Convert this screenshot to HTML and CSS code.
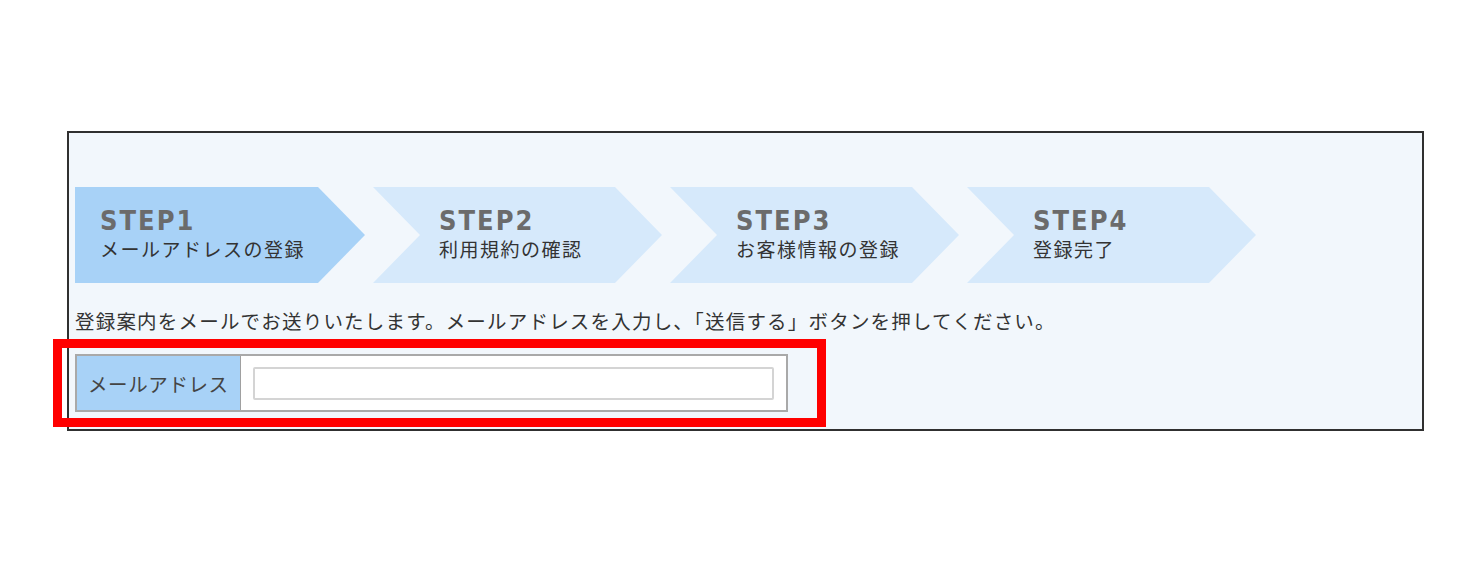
FILE: index.html
```html
<!DOCTYPE html>
<html lang="ja">
<head>
<meta charset="utf-8">
<title>メールアドレスの登録</title>
<link rel="stylesheet" href="styles.css">
</head>
<body>
<div class="panel">
  <ol class="steps">
    <li class="step step-current">
      <span class="step-num">STEP1</span>
      <span class="step-label">メールアドレスの登録</span>
    </li>
    <li class="step step-next">
      <span class="step-num">STEP2</span>
      <span class="step-label">利用規約の確認</span>
    </li>
    <li class="step step-next">
      <span class="step-num">STEP3</span>
      <span class="step-label">お客様情報の登録</span>
    </li>
    <li class="step step-next">
      <span class="step-num">STEP4</span>
      <span class="step-label">登録完了</span>
    </li>
  </ol>
  <p class="intro">登録案内をメールでお送りいたします。メールアドレスを入力し、「送信する」ボタンを押してください。</p>
  <div class="form-wrap">
    <div class="form-row">
      <div class="form-label">メールアドレス</div>
      <div class="form-field"><input class="email-input" type="text" aria-label="メールアドレス"></div>
    </div>
    <div class="highlight"></div>
  </div>
</div>
</body>
</html>
```
FILE: styles.css
```css
* { box-sizing: border-box; }
html, body { margin: 0; padding: 0; background: #ffffff; }
body {
  font-family: "Noto Sans CJK JP", "Noto Sans", sans-serif;
  color: #333;
}
.panel {
  margin: 131px 0 0 67px;
  width: 1357px;
  height: 300px;
  border: 2px solid #303030;
  background: #f2f7fc;
  padding: 54px 0 0 6px;
}
.steps {
  list-style: none;
  margin: 0;
  padding: 0;
  display: flex;
  gap: 8px;
}
.step {
  height: 96px;
  width: 289px;
  display: flex;
  flex-direction: column;
  justify-content: center;
  padding-left: 66px;
  padding-bottom: 2px;
  background: #d6e9fb;
  clip-path: polygon(0 0, calc(100% - 47px) 0, 100% 50%, calc(100% - 47px) 100%, 0 100%, 47px 50%);
}
.step-current {
  width: 290px;
  padding-left: 25px;
  background: #a8d2f7;
  clip-path: polygon(0 0, calc(100% - 47px) 0, 100% 50%, calc(100% - 47px) 100%, 0 100%);
}
.step-num {
  font-family: "DejaVu Sans Condensed", "DejaVu Sans", sans-serif;
  font-stretch: condensed;
  font-weight: bold;
  font-size: 27px;
  line-height: 30px;
  letter-spacing: 2px;
  color: #6b6b6b;
}
.step-label {
  font-size: 19px;
  line-height: 26px;
  color: #333;
  letter-spacing: 1.5px;
}
.intro {
  margin: 23px 0 0 0;
  font-size: 19.5px;
  line-height: 30px;
  letter-spacing: 1.2px;
  color: #333;
}
.form-wrap {
  position: relative;
  margin-top: 18px;
  width: 713px;
}
.form-row {
  display: flex;
  height: 58px;
  border: 2px solid #a9a9a9;
  background: #fff;
}
.form-label {
  width: 164px;
  background: #a8d2f7;
  border-right: 1px solid #a0a0a0;
  display: flex;
  align-items: center;
  padding-left: 11px;
  font-size: 19.5px;
  letter-spacing: 0.6px;
  color: #444;
}
.form-field {
  flex: 1;
  display: flex;
  align-items: center;
  padding: 0 12px;
}
.email-input {
  width: 521px;
  height: 33px;
  border: 2px solid #d4d4d4;
  border-radius: 2px;
  background: #fff;
  outline: none;
}
.highlight {
  position: absolute;
  top: -15px;
  left: -22px;
  right: -38px;
  bottom: -15px;
  border: 9px solid #ff0000;
  pointer-events: none;
}
```
